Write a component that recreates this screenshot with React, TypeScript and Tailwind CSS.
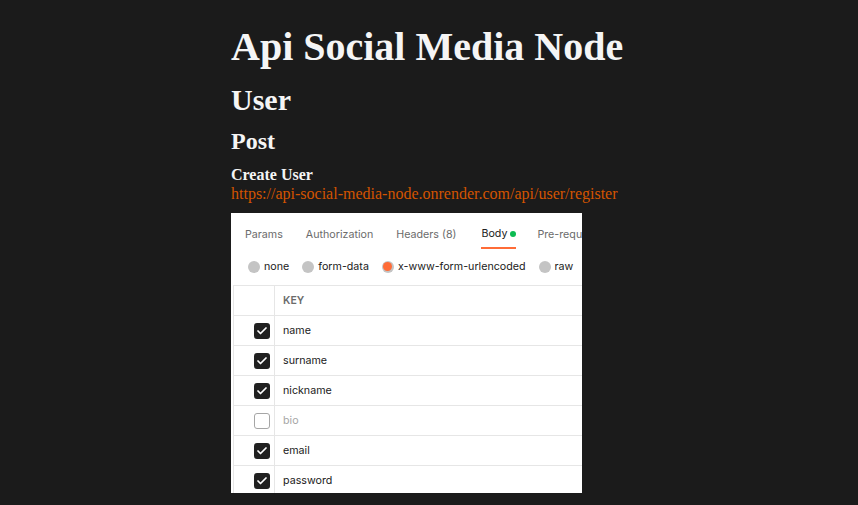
import { Check } from "lucide-react";

const TABS = ["Params", "Authorization", "Headers (8)", "Body", "Pre-request Script"];

const RADIOS = [
  { label: "none", active: false },
  { label: "form-data", active: false },
  { label: "x-www-form-urlencoded", active: true },
  { label: "raw", active: false },
];

const ROWS = [
  { key: "name", on: true },
  { key: "surname", on: true },
  { key: "nickname", on: true },
  { key: "bio", on: false },
  { key: "email", on: true },
  { key: "password", on: true },
];

function Box({ on }: { on: boolean }) {
  if (!on) {
    return <div className="h-4 w-4 rounded-[3px] border border-[#a6a6a6] bg-white" />;
  }
  return (
    <div className="flex h-4 w-4 items-center justify-center rounded-[3px] bg-[#212121]">
      <Check size={12} strokeWidth={3.5} className="text-white" />
    </div>
  );
}

function PostmanShot() {
  return (
    <div className="mt-[10px] h-[280px] w-[351px] overflow-hidden bg-white font-['Inter',sans-serif] text-[10.7px] text-[#6b6b6b]">
      <div className="flex h-[36px] items-end gap-[23px] whitespace-nowrap pl-[14px]">
        {TABS.map((t) => (
          <div
            key={t}
            className={
              t === "Body"
                ? "ml-[2px] mr-[-2px] flex h-[36px] items-center gap-[3px] border-b-2 border-[#ff6c37] pt-[8px] text-[#212121]"
                : "flex h-[36px] items-center pt-[8px]"
            }
          >
            {t}
            {t === "Body" && <span className="h-[6px] w-[6px] rounded-full bg-[#0cbb52]" />}
          </div>
        ))}
      </div>
      <div className="flex h-[36px] items-center gap-[13px] whitespace-nowrap pl-[17px] text-[#212121]">
        {RADIOS.map((r) => (
          <div key={r.label} className="flex items-center gap-[4px]">
            {r.active ? (
              <span className="flex h-3 w-3 items-center justify-center rounded-full bg-[#c4c4c4]">
                <span className="h-[9px] w-[9px] rounded-full bg-[#ff6c37]" />
              </span>
            ) : (
              <span className="h-3 w-3 rounded-full bg-[#c4c4c4]" />
            )}
            {r.label}
          </div>
        ))}
      </div>
      <div className="ml-[2px] border-l border-t border-[#e6e6e6]">
        <div className="flex h-[30px] border-b border-[#e6e6e6]">
          <div className="w-[41px] border-r border-[#e6e6e6]" />
          <div className="flex items-center pl-[8px] text-[10.5px] font-semibold">KEY</div>
        </div>
        {ROWS.map((r) => (
          <div key={r.key} className="flex h-[30px] border-b border-[#e6e6e6]">
            <div className="flex w-[41px] items-center justify-end border-r border-[#e6e6e6] pr-[4px]">
              <Box on={r.on} />
            </div>
            <div className={r.on ? "flex items-center pl-[8px] pt-[1px] text-[#212121]" : "flex items-center pl-[8px] pt-[1px] text-[#a6a6a6]"}>
              {r.key}
            </div>
          </div>
        ))}
      </div>
    </div>
  );
}

export default function App() {
  return (
    <div className="min-h-[505px] bg-[#1b1b1b] font-['Liberation_Serif',serif] text-[#f5f5f5]">
      <div className="mx-auto flex w-[396px] flex-col">
        <h1 className="mt-[24px] text-[40px] leading-[46px] font-bold">Api Social Media Node</h1>
        <h2 className="mt-[13px] text-[30px] leading-[34px] font-bold">User</h2>
        <h3 className="mt-[10px] text-[24px] leading-[28px] font-bold">Post</h3>
        <h4 className="mt-[11px] text-[16px] leading-[18px] font-bold">Create User</h4>
        <a className="mt-[1px] text-[16px] leading-[18px] text-[#d35400]">
          https://api-social-media-node.onrender.com/api/user/register
        </a>
        <PostmanShot />
      </div>
    </div>
  );
}
